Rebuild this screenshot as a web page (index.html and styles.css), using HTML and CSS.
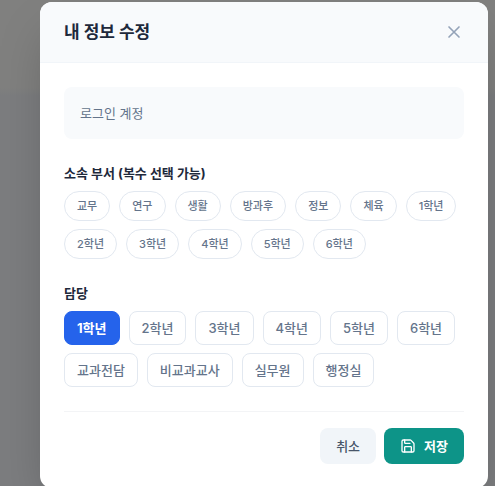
FILE: index.html
```html
<!DOCTYPE html>
<html lang="ko">
<head>
<meta charset="utf-8">
<meta name="viewport" content="width=device-width, initial-scale=1">
<title>내 정보 수정</title>
<link rel="stylesheet" href="styles.css">
</head>
<body>
<div class="backdrop">
  <form class="modal" role="dialog" aria-labelledby="modal-title">
    <header class="modal-header">
      <h1 class="modal-title" id="modal-title">내 정보 수정</h1>
      <button class="close" type="button" aria-label="닫기">
        <svg width="20" height="20" viewBox="0 0 24 24" fill="none" stroke="currentColor" stroke-width="2" stroke-linecap="round" stroke-linejoin="round"><path d="M18 6 6 18M6 6l12 12"/></svg>
      </button>
    </header>
    <div class="modal-body">
      <p class="account">로그인 계정</p>
      <section class="group" aria-labelledby="dept-label">
        <h2 class="group-label" id="dept-label">소속 부서 (복수 선택 가능)</h2>
        <div class="options">
          <button class="chip" type="button">교무</button>
          <button class="chip" type="button">연구</button>
          <button class="chip" type="button">생활</button>
          <button class="chip" type="button">방과후</button>
          <button class="chip" type="button">정보</button>
          <button class="chip" type="button">체육</button>
          <button class="chip" type="button">1학년</button>
          <button class="chip" type="button">2학년</button>
          <button class="chip" type="button">3학년</button>
          <button class="chip" type="button">4학년</button>
          <button class="chip" type="button">5학년</button>
          <button class="chip" type="button">6학년</button>
        </div>
      </section>
      <section class="group" aria-labelledby="role-label">
        <h2 class="group-label" id="role-label">담당</h2>
        <div class="options">
          <button class="role selected" type="button" aria-pressed="true">1학년</button>
          <button class="role" type="button">2학년</button>
          <button class="role" type="button">3학년</button>
          <button class="role" type="button">4학년</button>
          <button class="role" type="button">5학년</button>
          <button class="role" type="button">6학년</button>
          <button class="role" type="button">교과전담</button>
          <button class="role" type="button">비교과교사</button>
          <button class="role" type="button">실무원</button>
          <button class="role" type="button">행정실</button>
        </div>
      </section>
      <footer class="actions">
        <button class="action cancel" type="button">취소</button>
        <button class="action save" type="submit">
          <svg width="16" height="16" viewBox="0 0 24 24" fill="none" stroke="currentColor" stroke-width="2" stroke-linecap="round" stroke-linejoin="round"><path d="M15.2 3a2 2 0 0 1 1.4.6l3.8 3.8a2 2 0 0 1 .6 1.4V19a2 2 0 0 1-2 2H5a2 2 0 0 1-2-2V5a2 2 0 0 1 2-2z"/><path d="M17 21v-7a1 1 0 0 0-1-1H8a1 1 0 0 0-1 1v7"/><path d="M7 3v4a1 1 0 0 0 1 1h7"/></svg>
          저장
        </button>
      </footer>
    </div>
  </form>
</div>
</body>
</html>
```
FILE: styles.css
```css
* {
  box-sizing: border-box;
}

body {
  margin: 0;
  font-family: Inter, "Noto Sans CJK KR", sans-serif;
  font-size: 13px;
  line-height: 20px;
  color: #1e293b;
}

button {
  margin: 0;
  border: 0;
  background: none;
  font: inherit;
  cursor: pointer;
}

h1,
h2,
p {
  margin: 0;
}

.backdrop {
  height: 100vh;
  overflow: hidden;
  padding: 2px 7px 0 40px;
  background: linear-gradient(#80807f 88px, #7c7d7f 96px);
}

.modal {
  overflow: hidden;
  max-width: 448px;
  border-radius: 12px;
  background: #fff;
  box-shadow: 0 24px 48px -12px rgba(0, 0, 0, 0.25);
}

.modal-header {
  display: flex;
  align-items: center;
  justify-content: space-between;
  padding: 16px 24px;
  border-bottom: 1px solid #f1f5f9;
  background: #f8fafc;
}

.modal-title {
  font-size: 17px;
  line-height: 28px;
  font-weight: 700;
}

.close {
  display: flex;
  padding: 0;
  color: #94a3b8;
}

.modal-body {
  display: flex;
  flex-direction: column;
  gap: 24px;
  padding: 24px;
}

.account {
  padding: 16px;
  border-radius: 8px;
  background: #f8fafc;
  color: #64748b;
}

.group {
  display: flex;
  flex-direction: column;
  gap: 8px;
}

.group-label {
  font-size: 13px;
  line-height: 20px;
  font-weight: 700;
}

.options {
  display: flex;
  flex-wrap: wrap;
  gap: 8px 9px;
}

.chip,
.role {
  border: 1px solid #e2e8f0;
  background: #fff;
  color: #64748b;
  font-weight: 500;
}

.chip {
  padding: 6px 12px;
  border-radius: 15px;
  font-size: 11px;
  line-height: 16px;
}

.role {
  padding: 6px 12px;
  border-radius: 8px;
}

.selected {
  border-color: #2563eb;
  background: #2563eb;
  color: #fff;
  font-weight: 700;
}

.actions {
  display: flex;
  justify-content: flex-end;
  gap: 8px;
  padding-top: 16px;
  border-top: 1px solid #f3f4f6;
}

.action {
  display: flex;
  align-items: center;
  gap: 8px;
  padding: 8px 16px;
  border-radius: 8px;
}

.cancel {
  background: #f1f5f9;
  color: #475569;
  font-weight: 500;
}

.save {
  background: #0d9488;
  color: #fff;
  font-weight: 700;
}
```
